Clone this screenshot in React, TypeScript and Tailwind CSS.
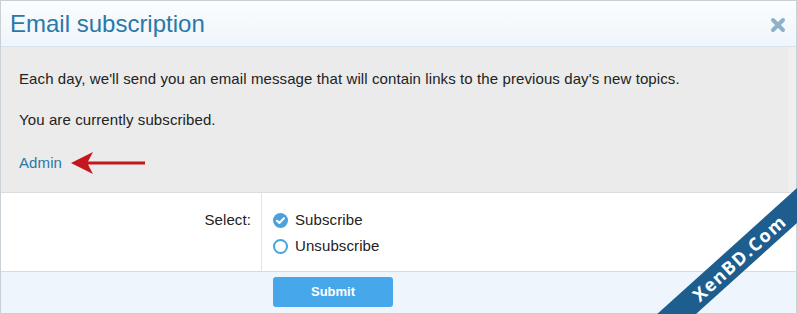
import React from "react";

export default function App() {
  return (
    <div className="relative w-[797px] h-[314px] overflow-hidden bg-white" style={{ fontFamily: '"Liberation Sans", Arial, sans-serif' }}>
      <div className="flex flex-col h-[314px] border border-[#c9d0d6]">
        {/* header */}
        <div className="h-[46px] shrink-0 flex items-center justify-between pl-[9px] pr-[9px] bg-gradient-to-b from-[#fbfdfe] to-[#eef5fb] border-b border-[#d8e2ea]">
          <h1 className="text-[24px] leading-none text-[#2a78a8] mt-[1px]">Email subscription</h1>
          <svg width="16" height="16" viewBox="0 0 16 16" className="mr-[1px] mt-[2px]">
            <path d="M3 3 L13 13 M13 3 L3 13" stroke="#8fb0c9" strokeWidth="4" strokeLinecap="round" />
          </svg>
        </div>
        {/* info block */}
        <div className="h-[146px] shrink-0 bg-[#ebebeb] border-b border-[#dcdcdc] pl-[18px] pt-[23px] text-[15px] tracking-[0.1px] text-[#222] border-r-[8px] border-r-[#efefef]">
          <p className="leading-[18px]">Each day, we'll send you an email message that will contain links to the previous day's new topics.</p>
          <p className="leading-[18px] mt-[23px]">You are currently subscribed.</p>
          <div className="flex items-center mt-[22px]">
            <a className="text-[#2a78a8] leading-[18px]">Admin</a>
            <svg width="76" height="24" viewBox="0 0 76 24" className="ml-[9px]">
              <path d="M0 12 L22 1 L17 10.5 L74 10.5 L74 13.5 L17 13.5 L22 23 Z" fill="#c4161c" />
            </svg>
          </div>
        </div>
        {/* form row */}
        <div className="flex h-[79px] shrink-0 border-b border-[#d6dbe0]">
          <div className="w-[261px] border-r border-[#e3e3e3] flex justify-end pr-[10px] pt-[18px] text-[15px] tracking-[0.1px] text-[#222] leading-[18px]">Select:</div>
          <div className="flex flex-col pl-[11px] pt-[18px] gap-[8px] text-[15px] tracking-[0.1px] text-[#222] leading-[18px]">
            <label className="flex items-center gap-[7px]">
              <svg width="15" height="15" viewBox="0 0 15 15">
                <circle cx="7.5" cy="7.5" r="7.5" fill="#4aa2dd" />
                <path d="M4 7.7 L6.4 10 L11 5.2" stroke="#fff" strokeWidth="2" fill="none" strokeLinecap="round" strokeLinejoin="round" />
              </svg>
              <span>Subscribe</span>
            </label>
            <label className="flex items-center gap-[7px]">
              <svg width="15" height="15" viewBox="0 0 15 15">
                <circle cx="7.5" cy="7.5" r="6.5" fill="#fff" stroke="#4aa2dd" strokeWidth="2" />
              </svg>
              <span>Unsubscribe</span>
            </label>
          </div>
        </div>
        {/* footer */}
        <div className="flex-1 bg-[#eef5fc] pl-[272px] pt-[5px]">
          <button className="w-[120px] h-[30px] rounded-[3px] bg-[#47a7eb] text-white font-bold text-[13px]">Submit</button>
        </div>
      </div>
      {/* watermark ribbon */}
      <div className="absolute left-[601px] top-[234px] w-[300px] h-[26px] bg-[#1d5e8e] -rotate-[42deg] flex items-center justify-center">
        <span className="text-white font-bold text-[18px] tracking-[1.5px] -translate-x-[16px]" style={{ fontFamily: '"Open Sans", "DejaVu Sans", sans-serif' }}>XenBD.Com</span>
      </div>
    </div>
  );
}
